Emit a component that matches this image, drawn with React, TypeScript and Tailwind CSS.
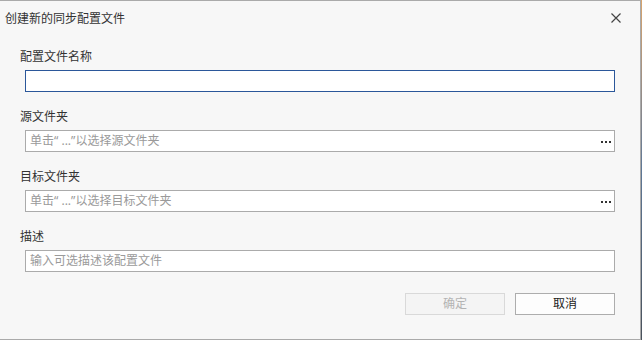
import React from "react";

const font = { fontFamily: '"Noto Sans", "Noto Sans CJK SC", sans-serif' };

function Dots() {
  return (
    <div className="flex items-center gap-[2px] mt-[2px]">
      <span className="block w-[2px] h-[2px] bg-[#333333]" />
      <span className="block w-[2px] h-[2px] bg-[#333333]" />
      <span className="block w-[2px] h-[2px] bg-[#333333]" />
    </div>
  );
}

function Field({
  label,
  placeholder,
  focused,
  browse,
  first,
}: {
  label: string;
  placeholder?: string;
  focused?: boolean;
  browse?: boolean;
  first?: boolean;
}) {
  return (
    <div className={first ? "flex flex-col" : "flex flex-col mt-[17px]"}>
      <div className="h-[16px] leading-[16px] text-[12px] text-[#333333]">{label}</div>
      <div
        className={
          "mt-[5px] ml-[5px] w-[590px] h-[22px] bg-white flex items-center pl-[4px] pr-[3px] border " +
          (focused ? "border-[#2b579a]" : "border-[#ababab]")
        }
      >
        <span className="flex-1 text-[12px] leading-[16px] text-[#9a9a9a]">{placeholder}</span>
        {browse && <Dots />}
      </div>
    </div>
  );
}

export default function App() {
  return (
    <div className="w-[642px] h-[340px] flex bg-[#f7f7f7]" style={font}>
      <div className="w-[641px] h-[340px] flex flex-col border-t border-b border-r border-[#aaaaaa] bg-[#f7f7f7]">
        <div className="h-[34px] flex items-center justify-between pl-[5px] pr-[19px]">
          <span className="text-[12px] leading-[16px] text-[#333333] mt-[1px]">创建新的同步配置文件</span>
          <svg width="10" height="10" viewBox="0 0 10 10" className="mt-[0px]">
            <path d="M0.5 0.5 L9.5 9.5 M9.5 0.5 L0.5 9.5" stroke="#444444" strokeWidth="1.2" />
          </svg>
        </div>
        <div className="flex flex-col pl-[20px] mt-[14px]">
          <Field label="配置文件名称" focused first />
          <Field label="源文件夹" placeholder="单击“ ...”以选择源文件夹" browse />
          <Field label="目标文件夹" placeholder="单击“ ...”以选择目标文件夹" browse />
          <Field label="描述" placeholder="输入可选描述该配置文件" />
          <div className="flex justify-end gap-[10px] mt-[21px] pr-[25px]">
            <div className="w-[100px] h-[22px] border border-[#d9d9d9] bg-[#f4f4f4] flex items-center justify-center text-[12px] text-[#b3b3b3]">
              确定
            </div>
            <div className="w-[100px] h-[22px] border border-[#adadad] bg-[#fdfdfd] flex items-center justify-center text-[12px] text-[#222222]">
              取消
            </div>
          </div>
        </div>
      </div>
      <div className="w-[1px] h-[340px] bg-gradient-to-b from-[#d8a46c] via-[#5f7896] to-[#4a525c]" />
    </div>
  );
}
